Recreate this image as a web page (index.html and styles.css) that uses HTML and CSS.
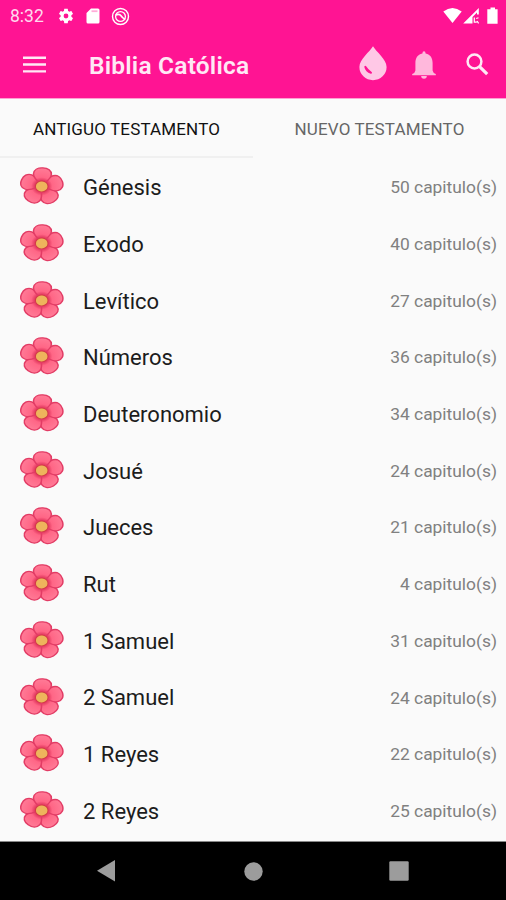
FILE: index.html
```html
<!DOCTYPE html>
<html lang="es">
	<head>
		<meta charset="utf-8">
		<meta name="viewport" content="width=device-width, initial-scale=1">
		<title>Biblia Católica</title>
		<link rel="stylesheet" href="styles.css">
	</head>
	<body>
		<svg class="defs" width="0" height="0">
			<defs>
				<radialGradient id="petalFill" gradientUnits="userSpaceOnUse" cx="0" cy="0" r="20">
					<stop offset="0.25" stop-color="#dc2f57"/>
					<stop offset="0.45" stop-color="#ff6686"/>
					<stop offset="1" stop-color="#ff7f9a"/>
				</radialGradient>
				<path id="petal" d="M0 -1C-2 -4 -7.600 -7 -7.600 -12C-7.600 -16 -4.300 -18.200 0 -18.200C4.300 -18.200 7.600 -16 7.600 -12C7.600 -7 2 -4 0 -1Z" fill="url(#petalFill)" stroke="#e23c65" stroke-width="1.300"/>
				<symbol id="flower" viewBox="0 0 44 40">
					<g transform="translate(21.700 19.400) scale(1.180 1.020) rotate(3)">
						<use href="#petal" transform="rotate(144)"/>
						<use href="#petal" transform="rotate(216)"/>
						<use href="#petal" transform="rotate(72)"/>
						<use href="#petal" transform="rotate(288)"/>
						<use href="#petal"/>
						<circle r="5.600" fill="#cf3f43"/>
						<circle r="4.900" fill="#eeb45c"/>
					</g>
				</symbol>
			</defs>
		</svg>

		<header>
			<div class="status">
				<span class="clock">8:32</span>
				<svg class="gear" width="18" height="18" viewBox="0 0 24 24"><path d="M19.140 12.940c.04-.3.06-.61.06-.94 0-.32-.02-.64-.07-.94l2.030-1.580c.18-.14.23-.41.12-.61l-1.920-3.320c-.12-.22-.37-.29-.59-.22l-2.390.96c-.5-.38-1.030-.7-1.620-.94l-.36-2.540c-.04-.24-.24-.41-.48-.41h-3.840c-.24 0-.43.17-.47.41l-.36 2.540c-.59.24-1.130.57-1.620.94l-2.390-.96c-.22-.08-.47 0-.59.22L2.740 8.870c-.12.21-.08.47.12.61l2.030 1.580c-.05.3-.09.63-.09.94s.02.64.07.94l-2.030 1.580c-.18.14-.23.41-.12.61l1.920 3.320c.12.22.37.29.59.22l2.390-.96c.5.38 1.030.7 1.620.94l.36 2.540c.05.24.24.41.48.41h3.840c.24 0 .44-.17.47-.41l.36-2.540c.59-.24 1.130-.56 1.620-.94l2.390.96c.22.08.47 0 .59-.22l1.920-3.320c.12-.22.07-.47-.12-.61l-2.010-1.580zM12 15.200A3.200 3.200 0 1 1 12 8.800a3.200 3.200 0 0 1 0 6.400z"/></svg>
				<svg class="sdcard" width="14" height="16" viewBox="0 0 14 16"><path d="M5 .5h7a1.500 1.500 0 0 1 1.500 1.500v12a1.500 1.500 0 0 1-1.500 1.500H2A1.500 1.500 0 0 1 .5 14V5z"/><path d="M5.500 3.200h6" stroke="#ff1493" stroke-opacity=".35" stroke-width="1.800"/></svg>
				<svg class="sync" width="19" height="19" viewBox="0 0 19 19" fill="none" stroke="#fff"><circle cx="9.500" cy="9.500" r="8" stroke-width="1.400"/><circle cx="9.500" cy="9.500" r="4.900" stroke-width="1.300"/><path d="M4.600 8Q8.500 6.500 10 8.700T14.300 12.500" stroke-width="1.700"/></svg>
				<svg class="signal" width="56" height="18" viewBox="0 0 56 18">
					<path d="M.3 4.500Q9.500-2.500 18.700 4.500L9.500 16z"/>
					<path d="M20.200 16.500L35.800 1v6.500h-1.800V5.500L29.500 10v6.500z"/>
					<path d="M31.300 10.500v4.700h2.500M33.200 11.500l2.300-.8M34 14l1.600 2.300" fill="none" stroke="#fff" stroke-width="1.200"/>
					<path d="M47.500 .5h4.500v1.700h2.600v14.500H44.300V2.200h3.200z"/>
				</svg>
			</div>
			<div class="toolbar">
				<svg class="menu" width="23" height="18" viewBox="0 0 23 18"><path d="M0 .5h23v2.400H0zM0 7.300h23v2.400H0zM0 14.200h23v2.400H0z"/></svg>
				<h1>Biblia Católica</h1>
				<svg class="drop" width="28" height="35" viewBox="0 0 28 35"><path d="M14 .3C17 5.500 27.600 13.500 27.600 21A13.600 13.200 0 0 1 .4 21C.4 13.500 11 5.500 14 .3z" fill="#ffc8e6"/><path d="M6.300 20.800Q7.300 25.500 12 26.800Q8 23.500 6.300 20.800z" fill="#ff1493" stroke="#ff1493" stroke-width="2" stroke-linejoin="round"/></svg>
				<svg class="bell" width="24" height="28" viewBox="0 0 24 28"><path d="M12 .3q1.600 0 1.600 2.300c5 1 7 4.800 7 9.400v7.500q.4 2.500 3.200 3.500v1.200H.2V23q2.800-1 3.200-3.500V12c0-4.600 2-8.400 7-9.400Q10.400.3 12 .3z" fill="#ffb8dc"/><path d="M9.200 25h5.600a2.800 2.800 0 0 1-5.600 0z" fill="#ffb8dc"/></svg>
				<svg class="search" width="23" height="23" viewBox="0 0 23 23" fill="none" stroke="#ffe8f5"><circle cx="8.500" cy="8.500" r="6.900" stroke-width="2.500"/><path d="M13.300 13.300L21.200 21.200" stroke-width="3.200"/></svg>
			</div>
		</header>

		<nav class="tabs">
			<a class="tab active"><span>ANTIGUO TESTAMENTO</span></a>
			<a class="tab"><span>NUEVO TESTAMENTO</span></a>
		</nav>

		<ul class="books">
			<li><svg class="flower"><use href="#flower"/></svg><span class="name">Génesis</span><span class="count">50 capitulo(s)</span></li>
			<li><svg class="flower"><use href="#flower"/></svg><span class="name">Exodo</span><span class="count">40 capitulo(s)</span></li>
			<li><svg class="flower"><use href="#flower"/></svg><span class="name">Levítico</span><span class="count">27 capitulo(s)</span></li>
			<li><svg class="flower"><use href="#flower"/></svg><span class="name">Números</span><span class="count">36 capitulo(s)</span></li>
			<li><svg class="flower"><use href="#flower"/></svg><span class="name">Deuteronomio</span><span class="count">34 capitulo(s)</span></li>
			<li><svg class="flower"><use href="#flower"/></svg><span class="name">Josué</span><span class="count">24 capitulo(s)</span></li>
			<li><svg class="flower"><use href="#flower"/></svg><span class="name">Jueces</span><span class="count">21 capitulo(s)</span></li>
			<li><svg class="flower"><use href="#flower"/></svg><span class="name">Rut</span><span class="count">4 capitulo(s)</span></li>
			<li><svg class="flower"><use href="#flower"/></svg><span class="name">1 Samuel</span><span class="count">31 capitulo(s)</span></li>
			<li><svg class="flower"><use href="#flower"/></svg><span class="name">2 Samuel</span><span class="count">24 capitulo(s)</span></li>
			<li><svg class="flower"><use href="#flower"/></svg><span class="name">1 Reyes</span><span class="count">22 capitulo(s)</span></li>
			<li><svg class="flower"><use href="#flower"/></svg><span class="name">2 Reyes</span><span class="count">25 capitulo(s)</span></li>
		</ul>

		<footer class="navbar">
			<svg width="20" height="22" viewBox="0 0 20 22"><path d="M18 0v21.500L0 10.800z"/></svg>
			<svg width="19" height="19" viewBox="0 0 19 19"><circle cx="9.500" cy="9.500" r="9.200"/></svg>
			<svg width="20" height="20" viewBox="0 0 20 20"><rect x=".3" y=".3" width="19.400" height="19.400" rx="1.200"/></svg>
		</footer>
	</body>
</html>
```

FILE: styles.css
```css
* {
	box-sizing: border-box;
}

body {
	margin: 0;
	width: 506px;
	height: 900px;
	overflow: hidden;
	display: flex;
	flex-direction: column;
	background: #fafafa;
	font-family: Roboto, sans-serif;
}

svg {
	display: block;
	flex: none;
}

.defs {
	position: absolute;
}

header {
	flex: none;
	height: 99px;
	background: #ff1493;
	border-bottom: 1px solid #ffa0d2;
	fill: #fff;
}

.status {
	height: 32px;
	display: flex;
	align-items: center;
	padding: 0 7px 0 10px;
}

.clock {
	width: 47px;
	font-size: 17.5px;
	color: #ffd9ee;
}

.sdcard {
	margin-left: 11px;
}

.sync {
	margin-left: 11px;
}

.signal {
	margin-left: auto;
}

.toolbar {
	height: 66px;
	display: flex;
	align-items: center;
	padding: 0 17px 0 23px;
	fill: #ffe8f5;
}

h1 {
	margin: 0 auto 0 43px;
	font-size: 24.5px;
	font-weight: 600;
	letter-spacing: 0.2px;
	color: #ffe8f5;
}

.drop {
	margin-top: -4px;
}

.bell {
	margin: 0 30px 0 25px;
}

.search {
	margin-top: -2px;
}

.tabs {
	flex: none;
	height: 59px;
	display: flex;
	font-size: 17px;
	letter-spacing: 0.15px;
	color: #666;
}

.tab {
	flex: 1;
	display: flex;
	align-items: center;
	justify-content: center;
	padding-top: 2px;
	border-bottom: 2px solid transparent;
}

.active {
	color: #111;
	border-bottom-color: #f0f0f0;
}

.books {
	flex: 1;
	margin: 0;
	padding: 1px 9px 0 20px;
	list-style: none;
	border-bottom: 1px solid #888;
}

.books li {
	height: 56.7px;
	display: flex;
	align-items: center;
}

.flower {
	width: 44px;
	height: 40px;
}

.name {
	margin: 0.6px 0 0 19px;
	font-size: 22px;
	color: #1c1c1c;
}

.count {
	margin-left: auto;
	font-size: 17.4px;
	color: #808080;
}

.navbar {
	flex: none;
	height: 58px;
	display: flex;
	align-items: center;
	justify-content: space-between;
	padding: 0 97px;
	background: #000;
	fill: #9c9c9c;
}
```
